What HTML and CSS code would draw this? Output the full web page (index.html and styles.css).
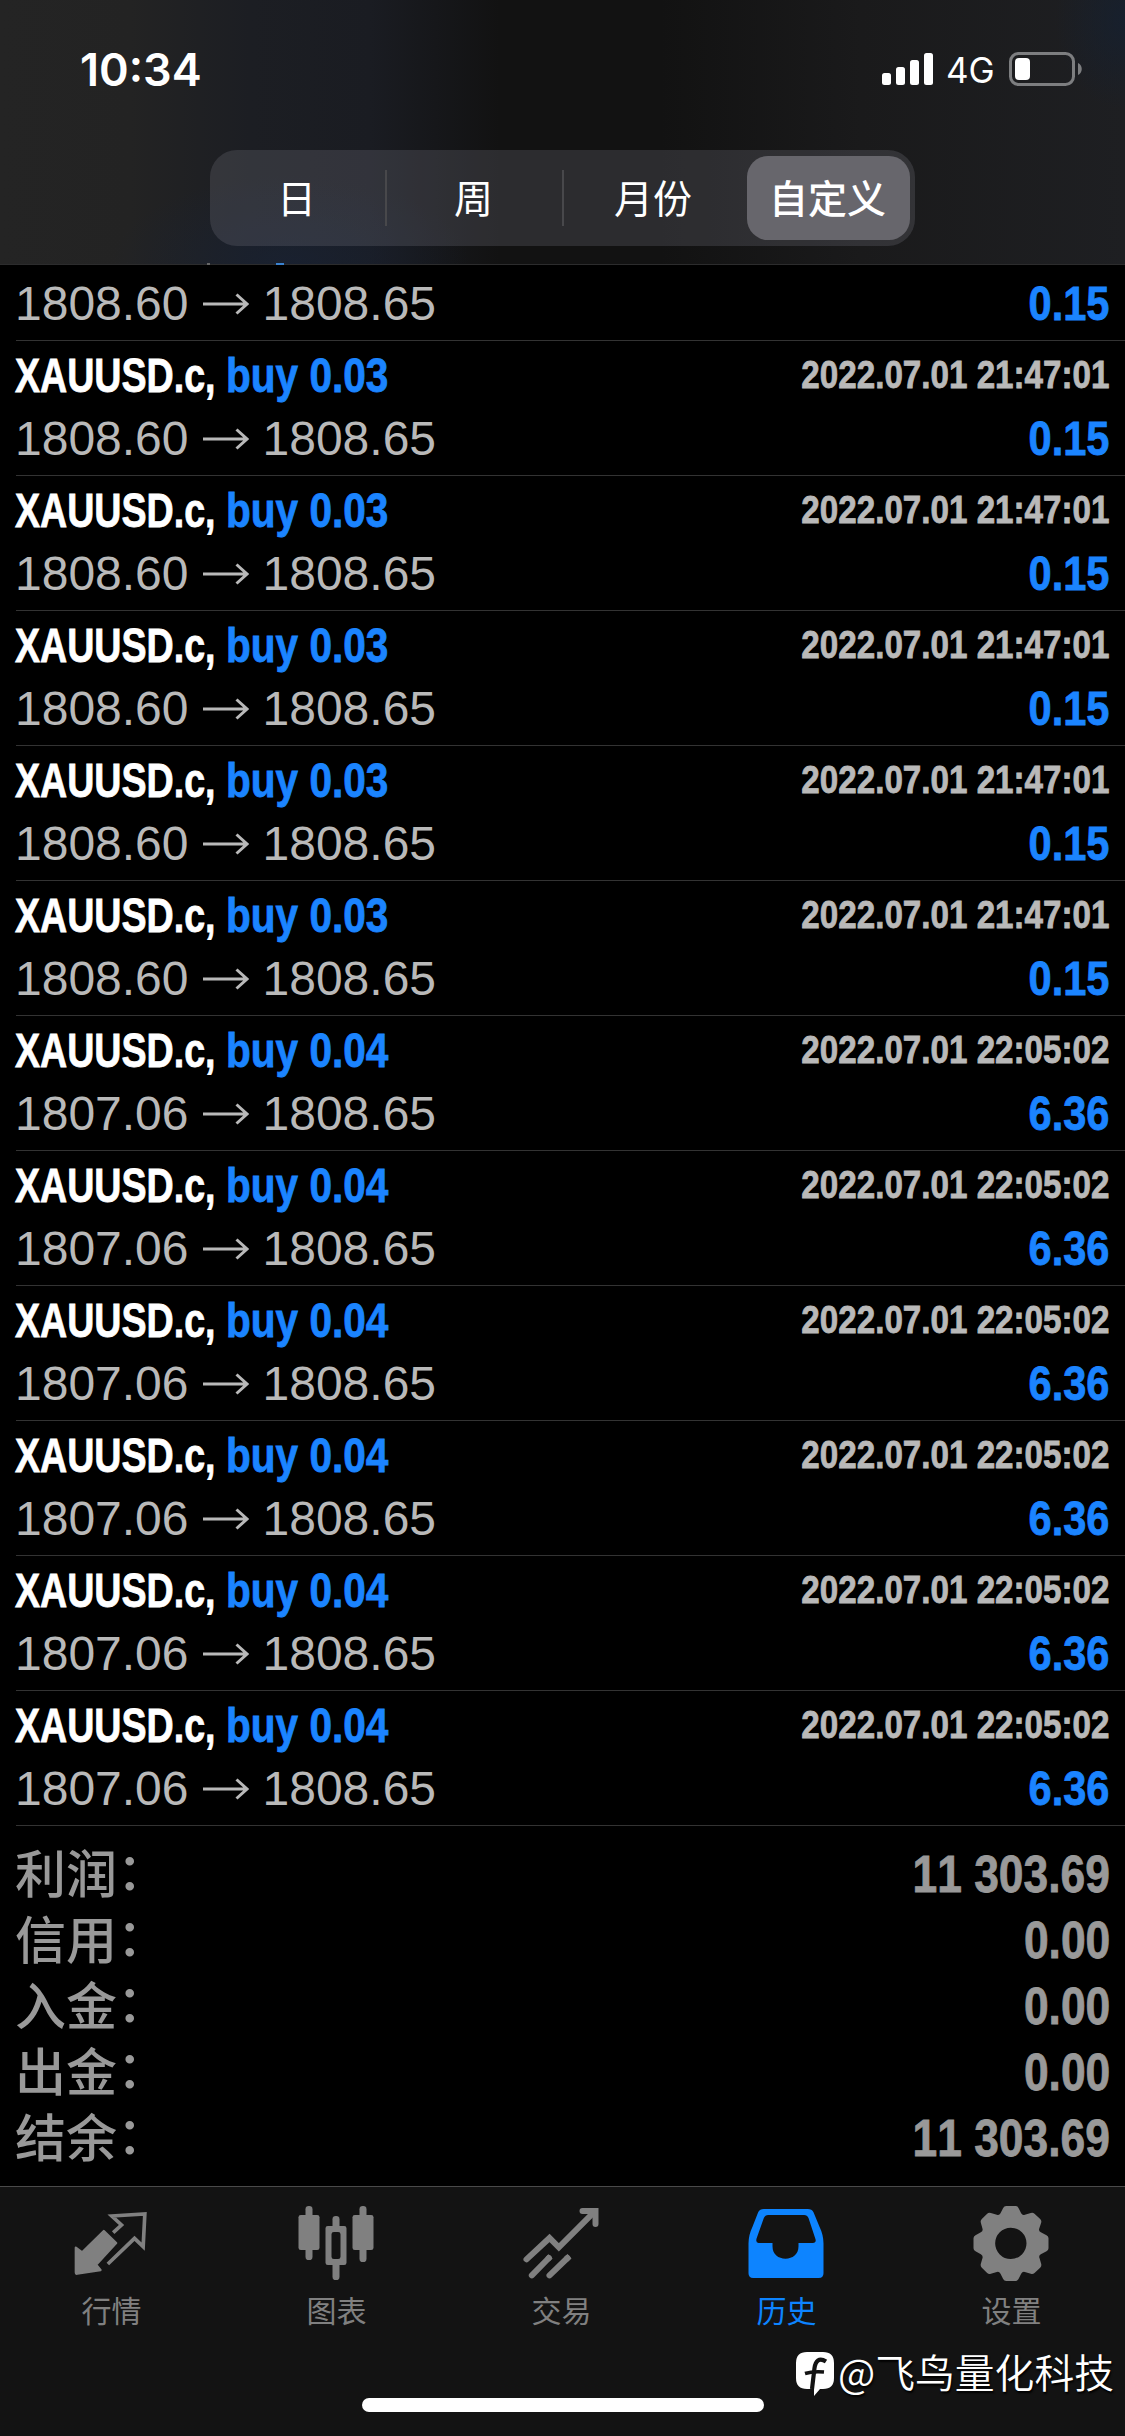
FILE: index.html
```html
<!DOCTYPE html>
<html lang="zh-CN">
<head>
<meta charset="utf-8">
<title>历史</title>
<link rel="stylesheet" href="styles.css">
</head>
<body>
<div class="screen">
  <header class="header">
    <div class="status">
      <span class="clock">10:34</span>
      <div class="indicators">
        <svg class="signal" viewBox="0 0 52 34" width="52" height="34" fill="#fff"><rect x="0" y="21" width="9" height="12" rx="2.5"/><rect x="14" y="15" width="9" height="18" rx="2.5"/><rect x="28" y="8" width="9" height="25" rx="2.5"/><rect x="42" y="1" width="9" height="32" rx="2.5"/></svg>
        <span class="network">4G</span>
        <svg class="battery" viewBox="0 0 74 34" width="74" height="34"><rect x="1.5" y="1.5" width="63" height="31" rx="8" fill="none" stroke="#7d7e80" stroke-width="3"/><rect x="6" y="6" width="15" height="22" rx="4" fill="#fff"/><path d="M69 11c5 2 5 10 0 12z" fill="#7d7e80"/></svg>
      </div>
    </div>
    <nav class="segments">
      <span class="segment">日</span>
      <span class="segment">周</span>
      <span class="segment segment-wide">月份</span>
      <span class="segment segment-on">自定义</span>
    </nav>
    <i class="peek peek-comma"></i><i class="peek peek-tail"></i>
  </header>

  <main class="deals">
    <section class="deal deal-first">
      <div class="line"><span class="prices">1808.60<svg class="arrow" viewBox="0 0 46 22"><path d="M0 11H44M33.500 1.500L44 11L33.500 20.500"/></svg>1808.65</span><b class="profit">0.15</b></div>
    </section>
    <section class="deal">
      <div class="line"><b class="symbol">XAUUSD.c,</b><b class="side">buy 0.03</b><b class="time">2022.07.01 21:47:01</b></div>
      <div class="line"><span class="prices">1808.60<svg class="arrow" viewBox="0 0 46 22"><path d="M0 11H44M33.500 1.500L44 11L33.500 20.500"/></svg>1808.65</span><b class="profit">0.15</b></div>
    </section>
    <section class="deal">
      <div class="line"><b class="symbol">XAUUSD.c,</b><b class="side">buy 0.03</b><b class="time">2022.07.01 21:47:01</b></div>
      <div class="line"><span class="prices">1808.60<svg class="arrow" viewBox="0 0 46 22"><path d="M0 11H44M33.500 1.500L44 11L33.500 20.500"/></svg>1808.65</span><b class="profit">0.15</b></div>
    </section>
    <section class="deal">
      <div class="line"><b class="symbol">XAUUSD.c,</b><b class="side">buy 0.03</b><b class="time">2022.07.01 21:47:01</b></div>
      <div class="line"><span class="prices">1808.60<svg class="arrow" viewBox="0 0 46 22"><path d="M0 11H44M33.500 1.500L44 11L33.500 20.500"/></svg>1808.65</span><b class="profit">0.15</b></div>
    </section>
    <section class="deal">
      <div class="line"><b class="symbol">XAUUSD.c,</b><b class="side">buy 0.03</b><b class="time">2022.07.01 21:47:01</b></div>
      <div class="line"><span class="prices">1808.60<svg class="arrow" viewBox="0 0 46 22"><path d="M0 11H44M33.500 1.500L44 11L33.500 20.500"/></svg>1808.65</span><b class="profit">0.15</b></div>
    </section>
    <section class="deal">
      <div class="line"><b class="symbol">XAUUSD.c,</b><b class="side">buy 0.03</b><b class="time">2022.07.01 21:47:01</b></div>
      <div class="line"><span class="prices">1808.60<svg class="arrow" viewBox="0 0 46 22"><path d="M0 11H44M33.500 1.500L44 11L33.500 20.500"/></svg>1808.65</span><b class="profit">0.15</b></div>
    </section>
    <section class="deal">
      <div class="line"><b class="symbol">XAUUSD.c,</b><b class="side">buy 0.04</b><b class="time">2022.07.01 22:05:02</b></div>
      <div class="line"><span class="prices">1807.06<svg class="arrow" viewBox="0 0 46 22"><path d="M0 11H44M33.500 1.500L44 11L33.500 20.500"/></svg>1808.65</span><b class="profit">6.36</b></div>
    </section>
    <section class="deal">
      <div class="line"><b class="symbol">XAUUSD.c,</b><b class="side">buy 0.04</b><b class="time">2022.07.01 22:05:02</b></div>
      <div class="line"><span class="prices">1807.06<svg class="arrow" viewBox="0 0 46 22"><path d="M0 11H44M33.500 1.500L44 11L33.500 20.500"/></svg>1808.65</span><b class="profit">6.36</b></div>
    </section>
    <section class="deal">
      <div class="line"><b class="symbol">XAUUSD.c,</b><b class="side">buy 0.04</b><b class="time">2022.07.01 22:05:02</b></div>
      <div class="line"><span class="prices">1807.06<svg class="arrow" viewBox="0 0 46 22"><path d="M0 11H44M33.500 1.500L44 11L33.500 20.500"/></svg>1808.65</span><b class="profit">6.36</b></div>
    </section>
    <section class="deal">
      <div class="line"><b class="symbol">XAUUSD.c,</b><b class="side">buy 0.04</b><b class="time">2022.07.01 22:05:02</b></div>
      <div class="line"><span class="prices">1807.06<svg class="arrow" viewBox="0 0 46 22"><path d="M0 11H44M33.500 1.500L44 11L33.500 20.500"/></svg>1808.65</span><b class="profit">6.36</b></div>
    </section>
    <section class="deal">
      <div class="line"><b class="symbol">XAUUSD.c,</b><b class="side">buy 0.04</b><b class="time">2022.07.01 22:05:02</b></div>
      <div class="line"><span class="prices">1807.06<svg class="arrow" viewBox="0 0 46 22"><path d="M0 11H44M33.500 1.500L44 11L33.500 20.500"/></svg>1808.65</span><b class="profit">6.36</b></div>
    </section>
    <section class="deal">
      <div class="line"><b class="symbol">XAUUSD.c,</b><b class="side">buy 0.04</b><b class="time">2022.07.01 22:05:02</b></div>
      <div class="line"><span class="prices">1807.06<svg class="arrow" viewBox="0 0 46 22"><path d="M0 11H44M33.500 1.500L44 11L33.500 20.500"/></svg>1808.65</span><b class="profit">6.36</b></div>
    </section>
  </main>

  <section class="summary">
    <div class="total"><span class="label">利润<span class="colon">：</span></span><b class="amount">11 303.69</b></div>
    <div class="total"><span class="label">信用<span class="colon">：</span></span><b class="amount">0.00</b></div>
    <div class="total"><span class="label">入金<span class="colon">：</span></span><b class="amount">0.00</b></div>
    <div class="total"><span class="label">出金<span class="colon">：</span></span><b class="amount">0.00</b></div>
    <div class="total"><span class="label">结余<span class="colon">：</span></span><b class="amount">11 303.69</b></div>
  </section>

  <footer class="footer">
    <nav class="tabs">
      <div class="tab">
        <svg class="icon" viewBox="97.500 75 240 240"><path d="M193 153l37 36-60 65 13 16-70 11c-3 1-4-1-4-4v-74l19 14z" fill="currentColor" stroke="currentColor" stroke-width="7" stroke-linejoin="round"/><path d="M221 158l25-23-29-27 99-6-5 98-26-25-80 77" fill="none" stroke="currentColor" stroke-width="11"/></svg>
        <span>行情</span>
      </div>
      <div class="tab">
        <svg class="icon" viewBox="772.500 75 240 240" fill="currentColor"><rect x="777" y="105" width="63" height="105" rx="7"/><rect x="798" y="78" width="21" height="162" rx="10"/><rect x="939" y="105" width="63" height="105" rx="7"/><rect x="960" y="78" width="21" height="168" rx="10"/><rect x="879" y="108" width="21" height="45" rx="10"/><rect x="879" y="240" width="21" height="60" rx="10"/><path fill-rule="evenodd" d="M865 138h49q7 0 7 7v103q0 7-7 7h-49q-7 0-7-7V145q0-7 7-7zM883 156q-7 0-7 7v67q0 7 7 7h13q7 0 7-7v-67q0-7-7-7z"/></svg>
        <span>图表</span>
      </div>
      <div class="tab">
        <svg class="icon" viewBox="97.500 75 240 240" fill="none" stroke="currentColor" stroke-width="18" stroke-linecap="round"><path d="M111 238L180 174L208 202L312 98"/><path d="M279 93H318V132"/><path d="M127 286L178 234M180 286L234 234"/><path d="M174 238L183 229M230 238L240 229" stroke-linecap="butt"/></svg>
        <span>交易</span>
      </div>
      <div class="tab tab-on">
        <svg class="icon" viewBox="772.500 75 240 240" fill="currentColor"><path fill-rule="evenodd" d="M823 87H955Q967 87 972 97L990 140Q1002 165 1002 190V280Q1002 294 988 294H791Q777 294 777 280V190Q777 165 789 140L806 97Q811 87 823 87zM836 105Q827 105 823 114L801 176Q798 188 807 189H849V199C849 224 867 236 888 236S927 224 927 199V189H970Q981 188 978 178L957 114Q953 105 944 105z"/></svg>
        <span>历史</span>
      </div>
      <div class="tab">
        <svg class="icon" viewBox="637.500 75 240 240"><path fill="currentColor" fill-rule="evenodd" d="M740 78H768Q774 78 777 84L785 100Q789 107 796 104L814 99Q820 97 825 101L842 117Q847 122 845 128L839 146Q837 154 844 157L861 166Q867 169 867 175V205Q867 211 861 214L844 223Q837 227 840 234L845 251Q847 258 842 263L825 279Q820 283 814 281L796 276Q789 274 785 281L777 297Q774 303 768 303H740Q734 303 731 297L723 281Q719 274 712 276L694 281Q688 283 683 279L667 263Q662 258 664 251L669 234Q671 227 664 223L648 214Q642 211 642 205V175Q642 169 648 166L664 157Q671 154 669 146L664 128Q662 122 667 117L683 101Q688 97 694 99L712 104Q719 107 723 100L731 84Q734 78 740 78zM754 143A47 47 0 1 0 754 237A47 47 0 1 0 754 143z"/></svg>
        <span>设置</span>
      </div>
    </nav>
    <div class="home-bar"></div>
    <div class="watermark">
      <svg viewBox="0 0 40 46" width="40" height="46"><path fill="#fff" d="M12 1H28Q39 1 39 12V27Q39 38 28 38H25L19 45V38H12Q1 38 1 27V12Q1 1 12 1z"/><path d="M31 10.500C24 6 20.500 10 19.500 17L17 38" fill="none" stroke="#131313" stroke-width="4.200"/><path d="M10 22.500Q18 20 29 21" fill="none" stroke="#131313" stroke-width="3.500"/></svg>
      <span>@飞鸟量化科技</span>
    </div>
  </footer>
</div>
</body>
</html>
```

FILE: styles.css
```css
* { box-sizing: border-box; }

body {
  margin: 0;
  background: #000;
  font-family: "Liberation Sans", "Noto Sans CJK SC", sans-serif;
  font-kerning: none;
}

.screen {
  width: 1125px;
  height: 2436px;
  overflow: hidden;
  display: flex;
  flex-direction: column;
}

/* Status bar and period switch */
.header {
  position: relative;
  height: 265px;
  flex: none;
  border-bottom: 1px solid #2c2c2d;
  background:
    radial-gradient(ellipse 180px 90px at 290px 265px, rgba(24, 35, 56, .6), transparent),
    radial-gradient(ellipse 70px 90px at 1125px 20px, rgba(20, 32, 50, .7), transparent),
    linear-gradient(90deg, #242424 0, #232323 130px, #1c1e23 250px, #1a1c22 370px, #121212 500px, #121212 660px, #1a1a1b 860px, #1e1f22 1125px);
}

.status {
  height: 150px;
  padding: 47px 42px 0 80px;
  display: flex;
  justify-content: space-between;
  align-items: flex-start;
  color: #fff;
  font-family: Inter, sans-serif;
}

.clock {
  font-size: 45px;
  line-height: 46px;
  font-weight: 600;
}

.indicators { display: flex; padding-top: 5px; }
.network { width: 75px; padding-left: 12px; font-size: 35px; line-height: 37px; }

.segments {
  width: 705px;
  height: 96px;
  margin-left: 210px;
  padding: 6px 5px 6px 0;
  display: flex;
  align-items: center;
  border-radius: 27px;
  background: rgba(118, 118, 130, .26);
  color: #fff;
  font-family: "Noto Sans CJK SC", sans-serif;
  font-size: 39px;
}

.segment {
  width: 177px;
  height: 56px;
  line-height: 52px;
  padding-right: 2px;
  text-align: center;
  border-right: 2px solid #48484b;
}
.segment-wide { width: 183px; border: 0; padding-right: 5px; }
.segment-on {
  width: 163px;
  height: 84px;
  line-height: 80px;
  border: 0;
  border-radius: 21px;
  background: #67666c;
  font-weight: 500;
}

/* Tips of the row that is scrolled under the header */
.peek { position: absolute; top: 263px; height: 2px; }
.peek-comma { left: 207px; width: 3px; background: #666; }
.peek-tail { left: 276px; width: 8px; background: #3a82d0; }

/* Deals */
.deal {
  height: 135px;
  margin-left: 16px;
  padding: 3px 16px 5px 0;
  border-bottom: 1px solid #333;
}
.deal-first { height: 76px; padding-top: 7px; }

.line {
  display: flex;
  height: 63px;
  margin-left: -1px;
  line-height: 63px;
  font-size: 48px;
  white-space: nowrap;
}

.symbol,
.side,
.time,
.profit,
.amount { -webkit-text-stroke: .8px currentColor; }

.symbol { width: 211px; color: #fff; transform: scaleX(.783); transform-origin: 0 0; flex: none; }
.side { width: 170px; color: #1b84ff; transform: scaleX(.845); transform-origin: 0 0; }
.time {
  margin-left: auto;
  line-height: 61px;
  font-size: 38.5px;
  color: #b9b9b9;
  transform: scaleX(.862);
  transform-origin: 100% 0;
}
.prices { display: flex; align-items: center; color: #b9b9b9; }
.arrow {
  width: 46px;
  height: 22px;
  margin: 1px 14px 0;
  fill: none;
  stroke: #b9b9b9;
  stroke-width: 3;
}
.profit {
  margin-left: auto;
  color: #1b84ff;
  transform: scaleX(.865);
  transform-origin: 100% 0;
}

/* Totals */
.summary { flex: 1; padding: 14px 15px 0 15px; color: #999; }
.total {
  display: flex;
  justify-content: space-between;
  height: 66px;
  font-size: 51px;
}
.label {
  line-height: 62px;
  font-family: "Noto Sans CJK SC", sans-serif;
  font-weight: 500;
}
.colon { display: inline-block; transform: translateY(-3px); }
.amount {
  line-height: 69px;
  font-weight: 700;
  transform: scaleX(.87);
  transform-origin: 100% 0;
}

/* Tab bar */
.footer {
  position: relative;
  height: 250px;
  flex: none;
  border-top: 1px solid #4a4a4a;
  background: #131313;
}
.tabs { display: flex; height: 211px; margin-left: -1px; padding-top: 18px; }
.tab {
  width: 225px;
  display: flex;
  flex-direction: column;
  align-items: center;
  color: #808080;
  font-family: "Noto Sans CJK SC", sans-serif;
  font-size: 30px;
  line-height: 42px;
}
.tab-on { color: #0d84ff; }
.icon { width: 80px; height: 80px; margin-bottom: 3px; }
.home-bar { width: 402px; height: 14px; margin: 0 auto; border-radius: 7px; background: #fff; }

.watermark {
  position: absolute;
  right: 11px;
  top: 157px;
  display: flex;
  align-items: center;
  gap: 3px;
  color: #fff;
  font-family: "Noto Sans CJK SC", sans-serif;
  font-size: 39.8px;
  line-height: 50px;
  font-weight: 350;
  text-shadow: 1px 2px 2px #000;
}
.watermark svg { margin-top: 7px; }
```
